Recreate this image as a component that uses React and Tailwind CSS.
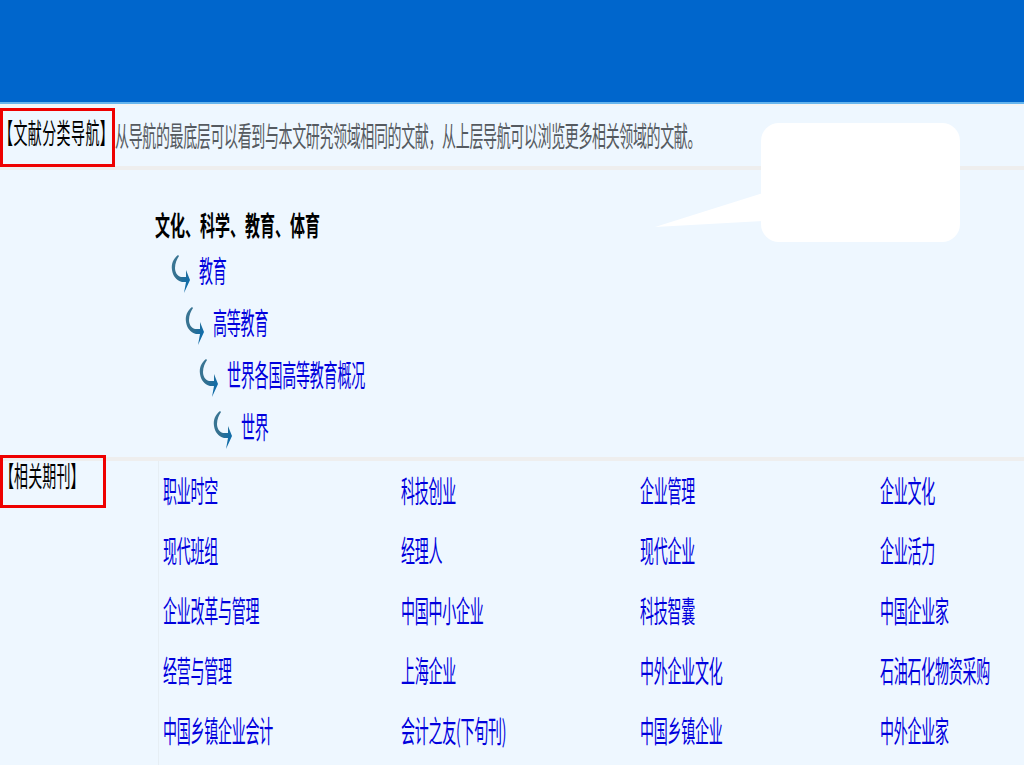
const stack = { fontFamily: '"Noto Sans CJK SC", "Liberation Sans", sans-serif' };

const journals = [
  ['职业时空', '科技创业', '企业管理', '企业文化'],
  ['现代班组', '经理人', '现代企业', '企业活力'],
  ['企业改革与管理', '中国中小企业', '科技智囊', '中国企业家'],
  ['经营与管理', '上海企业', '中外企业文化', '石油石化物资采购'],
  ['中国乡镇企业会计', '会计之友(下旬刊)', '中国乡镇企业', '中外企业家'],
];

const tree = [
  { label: '教育', indent: 'pl-[171px]' },
  { label: '高等教育', indent: 'pl-[185px]' },
  { label: '世界各国高等教育概况', indent: 'pl-[199px]' },
  { label: '世界', indent: 'pl-[213px]' },
];

function CurveArrow() {
  return (
    <svg width="20" height="38" viewBox="0 0 20 38" className="shrink-0">
      <defs>
        <linearGradient id="arrowFill" x1="0" y1="0" x2="1" y2="0.7">
          <stop offset="0" stopColor="#3d7896" />
          <stop offset="0.5" stopColor="#33708f" />
          <stop offset="1" stopColor="#0c6cac" />
        </linearGradient>
      </defs>
      <path
        d="M7 0 C2 4 0 9 1 15 C2 21 5 25 11 27 L15 27 L13 38 L19 25 L15 15 L15 22 L10 22 C6 21 4 17 4 13 C4 8 6 4 8 1 Z"
        fill="url(#arrowFill)"
      />
    </svg>
  );
}

export default function App() {
  return (
    <div className="h-[768px] w-[1024px] overflow-hidden bg-white" style={stack}>
      <div className="relative h-[765px] overflow-hidden bg-[#eef7ff]">
        <div className="h-[102px] bg-[#0066cc]" />
        <div className="h-[2px] bg-[#66b5ee]" />
        <div className="h-[2px] bg-[#f4f4f4]" />

        <div className="flex h-[64px] items-start border-b-4 border-[#eeeeee]">
          <div className="mt-[2px] flex h-[59px] w-[115px] shrink-0 items-start border-[3px] border-[#ee0000] pt-[4px]">
            <span className="-ml-[4px] origin-center scale-y-[2] whitespace-nowrap text-[14px] leading-[34px] tracking-[0.4px] text-black">【文献分类导航】</span>
          </div>
          <span className="origin-center scale-y-[2] whitespace-nowrap pt-[8px] text-[14px] leading-[34px] tracking-[-0.37px] text-[#555a60]">
            从导航的最底层可以看到与本文研究领域相同的文献，从上层导航可以浏览更多相关领域的文献。
          </span>
        </div>

        <div className="flex h-[291px] flex-col border-b-4 border-[#eeeeee]">
          <div className="flex h-[78px] items-end pb-[11px] pl-[155px]">
            <span className="origin-center scale-y-[1.8] whitespace-nowrap text-[15px] font-bold leading-[24px] text-black">文化、科学、教育、体育</span>
          </div>
          {tree.map((item) => (
            <div key={item.label} className={`flex h-[52px] items-center gap-[8px] ${item.indent}`}>
              <CurveArrow />
              <span className="mb-[10px] origin-center scale-y-[2.1] whitespace-nowrap text-[14px] leading-[20px] tracking-[-0.2px] text-[#0000dd]">{item.label}</span>
            </div>
          ))}
        </div>

        <div className="flex">
          <div className="h-[307px] w-[159px] shrink-0 border-r border-[#e6eef4]">
            <div className="-mt-[6px] flex h-[53px] w-[106px] items-start border-[3px] border-[#ee0000]">
              <span className="-ml-[3px] origin-center scale-y-[2] whitespace-nowrap pt-[3px] text-[14px] leading-[24px] tracking-[0.1px] text-black">【相关期刊】</span>
            </div>
          </div>
          <div className="grid flex-1 grid-cols-[238px_239px_240px_1fr] auto-rows-[60px] pl-[4px]">
            {journals.flat().map((name) => (
              <div key={name} className="flex h-[60px] items-center">
                <span className="mb-[4px] origin-center scale-y-[2.1] whitespace-nowrap text-[14px] leading-[20px] tracking-[-0.25px] text-[#0000dd]">{name}</span>
              </div>
            ))}
          </div>
        </div>

        {/* speech bubble sits over the header row */}
        <div className="absolute left-[761px] top-[123px] h-[119px] w-[199px] rounded-[18px] bg-white" />
        <svg className="absolute left-[650px] top-[190px]" width="115" height="40" viewBox="0 0 115 40">
          <path d="M5 37 L113 3 L113 31 Z" fill="#ffffff" />
        </svg>
      </div>
    </div>
  );
}
